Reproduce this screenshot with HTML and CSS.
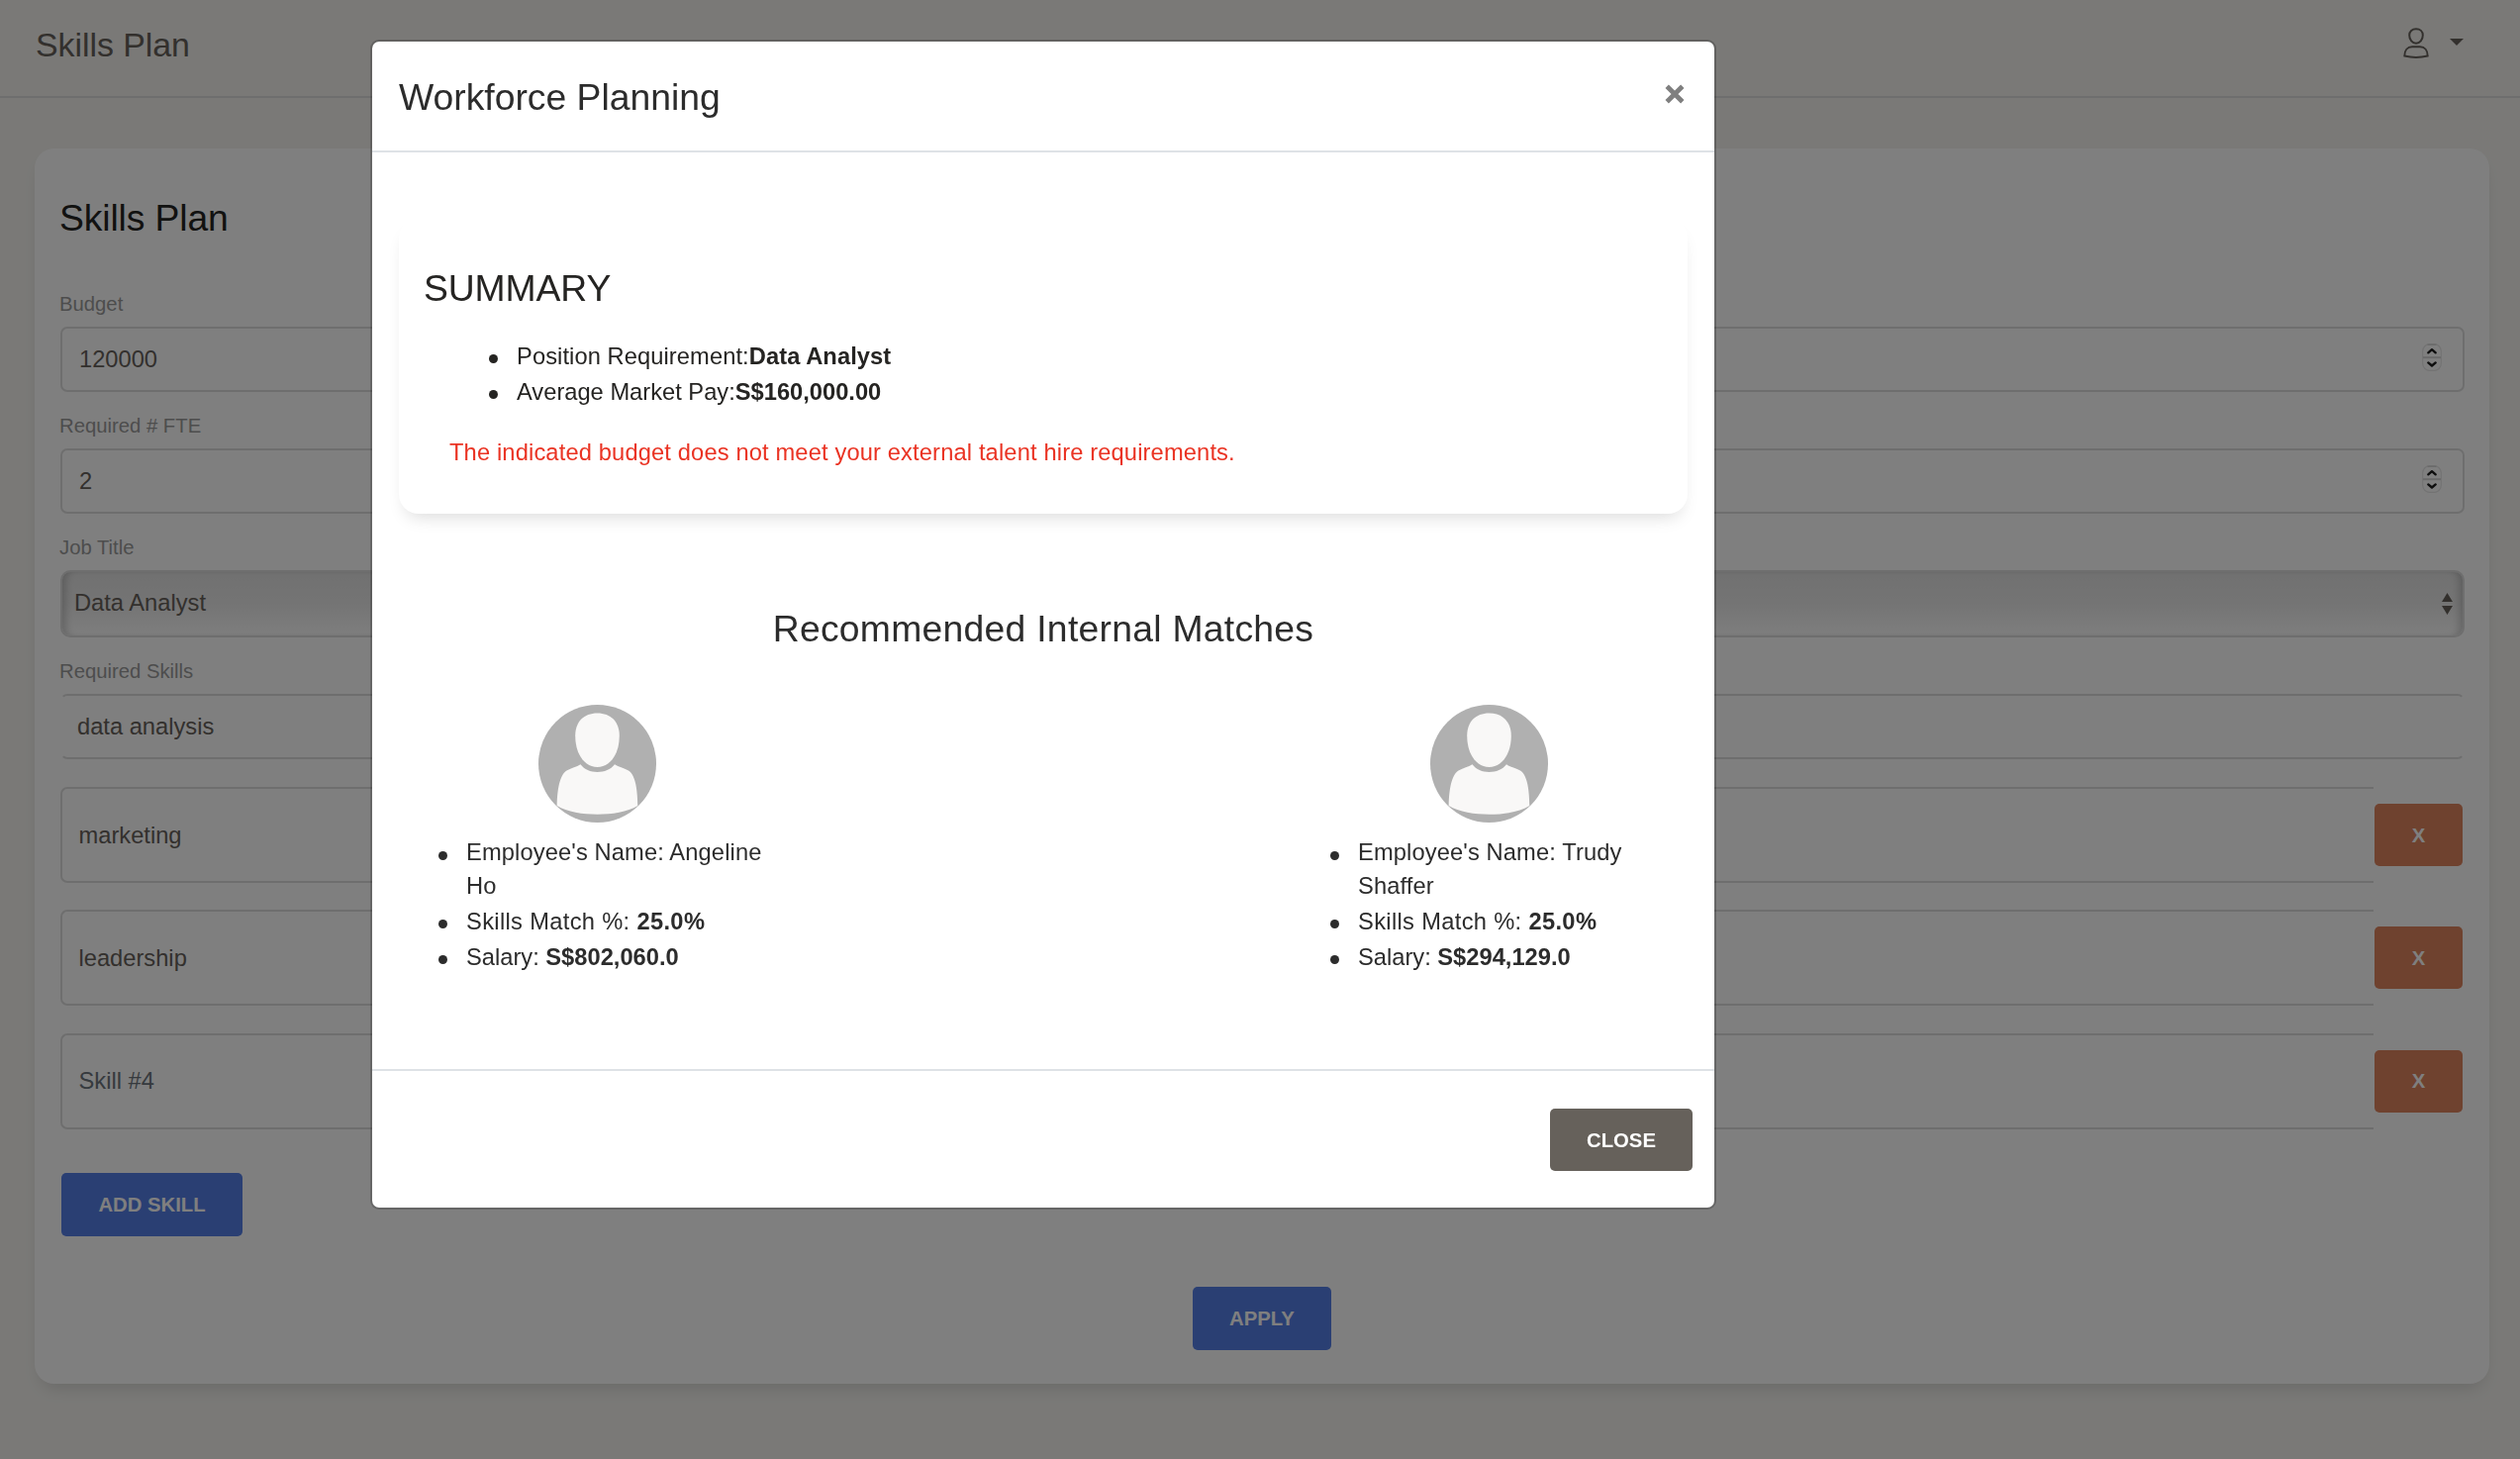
FILE: index.html
```html
<!DOCTYPE html>
<html lang="en">
<head>
<meta charset="utf-8">
<title>Skills Plan</title>
<link rel="stylesheet" href="styles.css">
</head>
<body>
<svg class="defs" width="0" height="0" aria-hidden="true">
  <symbol id="avatar" viewBox="0 0 119 119">
    <circle cx="59.5" cy="59.5" r="59.5" fill="#b0b0b0"/>
    <path fill="#f9f8f7" d="M59.500 8.500C73 8.500 81.800 17 81.800 31.500C81.800 49.500 72.500 63 59.500 63C46.500 63 37.200 49.500 37.200 31.500C37.200 17 46 8.500 59.500 8.500Z"/>
    <path fill="#f9f8f7" d="M42.500 60.300C46.500 65.500 52.500 68 59.500 68C66.500 68 73 65.500 77 60.300C81 63.300 86 63.500 91 66.500C98.500 71.500 100 87 100.300 102C90 108.500 74 110.700 59.500 110.700C45 110.700 29 108.500 18.700 102C19 87 21 71.500 28.500 66.500C33.500 63.500 38.500 63.300 42.500 60.300Z"/>
  </symbol>
  <symbol id="stepper" viewBox="0 0 20 28">
    <rect x="0.7" y="0.7" width="18.600" height="26.600" rx="7" fill="#fff" stroke="#e6e6e6" stroke-width="1.200"/>
    <path d="M5.500 1.200H14.500" stroke="#c8c8c8" stroke-width="1"/>
    <path d="M1 14.200H19" stroke="#d4d4d4" stroke-width="2"/>
    <path d="M6.300 9.300L10 6.200L13.700 9.300M6.300 19.400L10 22.500L13.700 19.400" fill="none" stroke="#1c1c1c" stroke-width="2.400" stroke-linecap="round" stroke-linejoin="round"/>
  </symbol>
</svg>

<header class="navbar">
  <span class="brand">Skills Plan</span>
  <div class="account">
    <svg class="user-icon" viewBox="0 0 26 31" fill="none" stroke="#66615b" stroke-width="2">
      <path d="M13 1.300C17 1.300 19.800 3.900 19.800 7.500C19.800 12.300 16.700 15.800 13 15.800C9.300 15.800 6.200 12.300 6.200 7.500C6.200 3.900 9 1.300 13 1.300Z"/>
      <path d="M9 19.300H17C21.700 19.300 24.700 23 24.700 28.500C17.500 30.200 8.500 30.200 1.300 28.500C1.300 23 4.300 19.300 9 19.300Z"/>
    </svg>
    <span class="caret"></span>
  </div>
</header>

<main class="card">
  <h4 class="card-title">Skills Plan</h4>
  <label class="label">Budget</label>
  <div class="field"><span>120000</span><svg class="stepper"><use href="#stepper"/></svg></div>
  <label class="label">Required # FTE</label>
  <div class="field"><span>2</span><svg class="stepper"><use href="#stepper"/></svg></div>
  <label class="label">Job Title</label>
  <div class="select"><span>Data Analyst</span>
    <svg class="arrows" viewBox="0 0 11 22"><path fill="#66615b" d="M5.500 0L11 9H0ZM5.500 22L0 13H11Z"/></svg>
  </div>
  <label class="label">Required Skills</label>
  <div class="field open"><span>data analysis</span></div>
  <div class="skills">
    <div class="skill"><div class="skill-input">marketing</div><button class="btn danger">X</button></div>
    <div class="skill"><div class="skill-input">leadership</div><button class="btn danger">X</button></div>
    <div class="skill"><div class="skill-input placeholder">Skill #4</div><button class="btn danger">X</button></div>
  </div>
  <button class="btn primary add">ADD SKILL</button>
  <button class="btn primary apply">APPLY</button>
</main>

<div class="backdrop">
  <section class="modal">
    <header class="modal-header">
      <h5 class="modal-title">Workforce Planning</h5>
      <svg class="dismiss" viewBox="0 0 20 20"><path d="M2.200 2.200L17.800 17.800M17.800 2.200L2.200 17.800" stroke="#7f7f7f" stroke-width="4.800"/></svg>
    </header>
    <div class="modal-body">
      <div class="summary">
        <h5 class="summary-title">SUMMARY</h5>
        <ul class="list summary-list">
          <li class="position"><span>Position Requirement:<b>Data Analyst</b></span></li>
          <li><span>Average Market Pay:<b>S$160,000.00</b></span></li>
        </ul>
        <p class="warning">The indicated budget does not meet your external talent hire requirements.</p>
      </div>
      <h5 class="matches-title">Recommended Internal Matches</h5>
      <div class="matches">
        <article class="match">
          <svg class="avatar"><use href="#avatar"/></svg>
          <ul class="list">
            <li class="name"><span>Employee's Name: Angeline<br>Ho</span></li>
            <li class="percent"><span>Skills Match %: <b>25.0%</b></span></li>
            <li><span>Salary: <b>S$802,060.0</b></span></li>
          </ul>
        </article>
        <article class="match">
          <svg class="avatar"><use href="#avatar"/></svg>
          <ul class="list">
            <li class="name"><span>Employee's Name: Trudy<br>Shaffer</span></li>
            <li class="percent"><span>Skills Match %: <b>25.0%</b></span></li>
            <li><span>Salary: <b>S$294,129.0</b></span></li>
          </ul>
        </article>
      </div>
    </div>
    <footer class="modal-footer"><button class="btn default">CLOSE</button></footer>
  </section>
</div>
</body>
</html>
```
FILE: styles.css
```css
* { box-sizing: border-box; }
html, body { height: 100%; }
body {
  margin: 0;
  overflow: hidden;
  background: #f4f3ef;
  color: #2c2c2c;
  font: 23.7px/36px "Liberation Sans", Arial, sans-serif;
  white-space: nowrap;
}
.defs { position: absolute; }
h4, h5, p, ul { margin: 0; padding: 0; font-weight: 400; }

.navbar {
  display: flex;
  justify-content: space-between;
  height: 99px;
  padding: 0 57px 0 36px;
  border-bottom: 2px solid #ddd;
}
.brand { color: #66615b; font-size: 33.9px; line-height: 91px; letter-spacing: -.05px; }
.account { display: flex; gap: 21px; padding-top: 28px; }
.user-icon { width: 26px; height: 31px; }
.caret {
  margin-top: 11px;
  width: 14px;
  height: 7px;
  background: #66615b;
  clip-path: polygon(0 0, 100% 0, 50% 100%);
}

.card {
  display: flex;
  flex-direction: column;
  height: 1248px;
  margin: 51px 31px 0 35px;
  padding: 48px 25px 0 26px;
  border-radius: 20px;
  background: #fff;
  box-shadow: 0 10px 17px -7px rgba(0, 0, 0, .15);
}
.card-title { margin: 0 0 30px -1px; color: #252422; font-size: 37.3px; line-height: 45px; letter-spacing: -.12px; }
.label { margin: 22px 0 11px -1px; color: #9a9a9a; font-size: 20.3px; line-height: 24px; }
.field, .select, .skill-input {
  display: flex;
  align-items: center;
  justify-content: space-between;
  border: 2px solid #ddd;
  border-radius: 7px;
  color: #66615b;
}
.field { height: 66px; padding: 0 21px 0 17px; }
.field.open { border-left-color: transparent; border-right-color: transparent; padding-left: 15px; }
.stepper { width: 20px; height: 28px; margin-top: -5px; }
.select {
  height: 68px;
  padding: 0 10px 2px 12px;
  border-radius: 10px;
  background: linear-gradient(#e2e2e2, #e9e9e9 50%, #fdfdfd);
  box-shadow: inset 8px 0 8px -5px rgba(0, 0, 0, .2), inset -8px 0 8px -5px rgba(0, 0, 0, .2);
}
.arrows { width: 11px; height: 22px; margin-top: 2px; }
.skills { display: flex; flex-direction: column; gap: 27.4px; margin-top: 28px; }
.skill { display: flex; align-items: center; gap: 1px; height: 97px; padding-right: 2px; }
.skill-input {
  flex: 1;
  height: 97px;
  padding: 0 16.5px;
  border-right: 0;
  border-radius: 7px 0 0 7px;
}
.placeholder { color: #6c757d; }

.btn {
  height: 64px;
  padding: 0;
  border: 0;
  border-radius: 5px;
  color: #fff;
  font: 700 20.3px/24px "Liberation Sans", Arial, sans-serif;
}
.danger { width: 89px; height: 63px; background: #de845e; }
.primary { background: #547ee6; }
.add { width: 183px; margin: 44px 0 0 1px; }
.apply { align-self: center; width: 140px; margin: 51px 1px 0 0; }
.default { width: 144px; height: 63px; background: #66615b; }

.backdrop { position: fixed; inset: 0; padding: 40px 0 0 374px; background: rgba(0, 0, 0, .5); }
.modal {
  display: flex;
  flex-direction: column;
  width: 1360px;
  height: 1182px;
  border: 2px solid rgba(0, 0, 0, .2);
  border-radius: 9px;
  background: #fff;
  background-clip: padding-box;
}
.modal-header {
  display: flex;
  justify-content: space-between;
  height: 112px;
  padding: 0 30px 0 27px;
  border-bottom: 2px solid #dee2e6;
}
.modal-title, .summary-title, .matches-title { font-size: 37.3px; line-height: 45px; }
.modal-title { margin-top: 34px; }
.dismiss { width: 20px; height: 20px; margin-top: 43px; }
.modal-body { flex: 1; padding: 67px 27px 0; }
.summary {
  height: 298px;
  padding: 48px 26px 0 25px;
  border-radius: 20px;
  color: #252422;
  box-shadow: 0 10px 17px -7px rgba(0, 0, 0, .15);
}
.summary-title { letter-spacing: -.1px; }
.list { list-style: none; }
.list li { display: flex; align-items: flex-start; gap: 19px; }
.list li::before { content: ""; flex: none; width: 9px; height: 9px; margin-top: 16px; border-radius: 50%; background: currentColor; }
.summary-list { margin: 28px 0 0 66px; }
.position { letter-spacing: .08px; }
.warning { margin: 25px 0 0 26px; color: #ea3323; letter-spacing: .14px; }
.matches-title { margin-top: 94px; text-align: center; letter-spacing: .27px; }
.matches { display: flex; justify-content: space-between; margin-top: 54px; }
.match { width: 401px; padding-left: 40px; }
.avatar { display: block; width: 119px; height: 119px; margin: 0 0 13px 101px; }
.name { margin-bottom: 1px; line-height: 34px; letter-spacing: .12px; }
.percent { letter-spacing: .33px; }
.modal-footer {
  display: flex;
  justify-content: flex-end;
  height: 140px;
  padding: 38px 22px 0;
  border-top: 2px solid #dee2e6;
}
```
